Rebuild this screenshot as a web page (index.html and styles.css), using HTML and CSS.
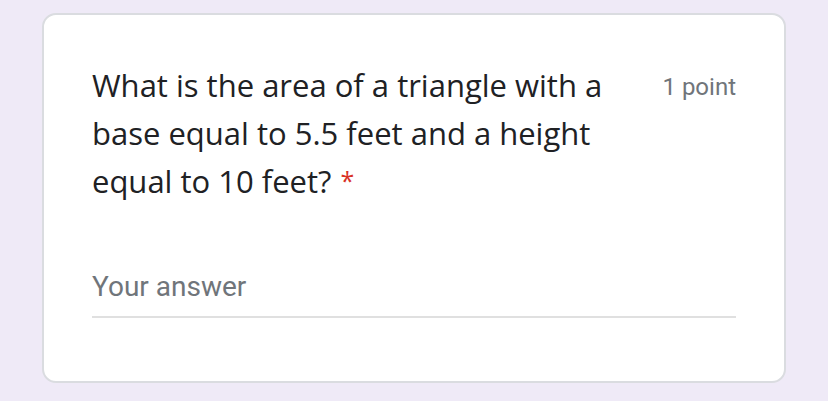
FILE: index.html
```html
<!DOCTYPE html>
<html>
<head>
<meta charset="utf-8">
<link rel="stylesheet" href="styles.css">
</head>
<body>
<div class="card">
  <div class="header">
    <div class="question">What is the area of a triangle with a base equal to 5.5 feet and a height equal to 10 feet?<span class="req">*</span></div>
    <div class="points">1 point</div>
  </div>
  <div class="answer">
    <div class="placeholder">Your answer</div>
  </div>
</div>
</body>
</html>
```
FILE: styles.css
```css
html, body {
  margin: 0;
  padding: 0;
}
body {
  background: #efeaf7;
  width: 828px;
  height: 401px;
  overflow: hidden;
  padding: 13px 42px 0 42px;
  box-sizing: border-box;
}
.card {
  background: #fff;
  border: 2px solid #dadce0;
  border-radius: 14px;
  height: 370px;
  box-sizing: border-box;
  padding: 46px 48px 0 48px;
}
.header {
  display: flex;
  justify-content: space-between;
  align-items: flex-start;
  gap: 30px;
}
.question {
  font-family: "Open Sans", sans-serif;
  font-size: 31px;
  line-height: 48px;
  color: #202124;
  width: 540px;
}
.req {
  display: inline-block;
  margin-left: 9px;
  font-size: 25px;
  line-height: 20px;
  vertical-align: 3px;
  color: #d93025;
}
.points {
  font-family: Roboto, sans-serif;
  font-size: 24px;
  line-height: 48px;
  margin-top: 2px;
  color: #70757a;
  white-space: nowrap;
}
.answer {
  margin-top: 64px;
  border-bottom: 2px solid #e0e0e0;
  padding-bottom: 11px;
}
.placeholder {
  font-family: Roboto, sans-serif;
  font-size: 28px;
  line-height: 36px;
  color: #70757a;
}
```
